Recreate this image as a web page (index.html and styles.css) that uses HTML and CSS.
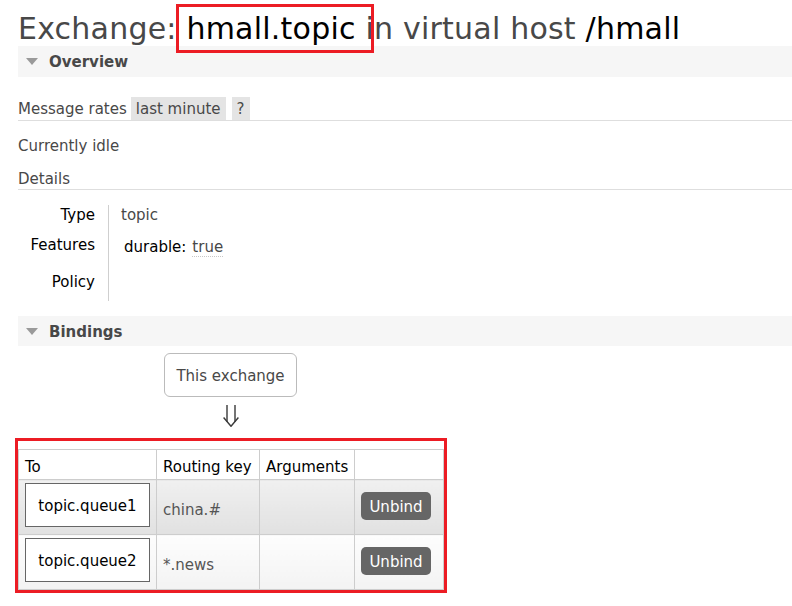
FILE: index.html
```html
<!DOCTYPE html>
<html lang="en">
<head>
<meta charset="utf-8">
<title>Exchange: hmall.topic</title>
<link rel="stylesheet" href="styles.css">
</head>
<body>
  <h1 class="title">Exchange: <span class="hl marked">hmall.topic</span> in virtual host <span class="hl">/hmall</span></h1>

  <div class="section-bar"><span class="tri"></span><span class="section-name">Overview</span></div>

  <div class="rates-row">
    <span class="rates-label">Message rates</span>
    <span class="chip chip-range">last minute</span>
    <span class="chip chip-help">?</span>
  </div>

  <p class="idle">Currently idle</p>
  <p class="details-title">Details</p>

  <div class="details">
    <div class="d-label d-r1">Type</div>
    <div class="d-value d-r1">topic</div>
    <div class="d-label d-r2">Features</div>
    <div class="d-value d-r2"><span class="feat-key">durable:</span><span class="feat-val">true</span></div>
    <div class="d-label d-r3">Policy</div>
    <div class="d-value d-r3"></div>
  </div>

  <div class="section-bar section-bindings"><span class="tri"></span><span class="section-name">Bindings</span></div>

  <div class="flow">
    <div class="this-exchange">This exchange</div>
    <svg class="down-arrow" width="16" height="22" viewBox="0 0 16 22" aria-hidden="true">
      <path d="M4 0 V17 M12 0 V17" stroke="#3a3a3a" stroke-width="1.4" fill="none"/>
      <path d="M0.6 12.5 L8 21.3 L15.4 12.5" stroke="#3a3a3a" stroke-width="1.4" fill="none" stroke-linejoin="miter"/>
    </svg>
  </div>

  <div class="marked-table">
    <table class="bindings">
      <colgroup>
        <col class="c-to"><col class="c-key"><col class="c-args"><col class="c-act">
      </colgroup>
      <thead>
        <tr><th>To</th><th>Routing key</th><th>Arguments</th><th></th></tr>
      </thead>
      <tbody>
        <tr class="row-hover">
          <td class="to-cell"><div class="queue-box">topic.queue1</div></td>
          <td class="key">china.#</td>
          <td></td>
          <td class="act"><span class="btn">Unbind</span></td>
        </tr>
        <tr class="row-plain">
          <td class="to-cell"><div class="queue-box">topic.queue2</div></td>
          <td class="key">*.news</td>
          <td></td>
          <td class="act"><span class="btn">Unbind</span></td>
        </tr>
      </tbody>
    </table>
  </div>
</body>
</html>
```

FILE: styles.css
```css
html, body {
  margin: 0;
  padding: 0;
}

body {
  padding-left: 18px;
  font-family: "DejaVu Sans", Verdana, sans-serif;
  font-size: 15px;
  line-height: 18px;
  color: #484848;
  background: #fff;
}

.title {
  margin: 12px 0 0 0;
  font-size: 30px;
  line-height: 34px;
  letter-spacing: 0.22px;
  font-weight: normal;
  color: #484848;
  white-space: nowrap;
}

.hl {
  color: #000;
}

.marked {
  position: relative;
}

.marked::after {
  content: "";
  position: absolute;
  left: -10px;
  right: -18px;
  top: -7px;
  height: 49px;
  border: 3px solid #ec1c24;
  box-sizing: border-box;
}

.section-bar {
  display: flex;
  align-items: center;
  height: 31px;
  background: #f6f6f6;
}

.tri {
  width: 0;
  height: 0;
  margin-left: 8px;
  margin-right: 11px;
  border-left: 6.5px solid transparent;
  border-right: 6.5px solid transparent;
  border-top: 7px solid #9a9a9a;
}

.section-name {
  font-weight: bold;
  color: #484848;
  padding-top: 1px;
}

.rates-row {
  display: flex;
  align-items: stretch;
  margin-top: 20px;
  height: 24px;
  box-sizing: border-box;
  border-bottom: 1px solid #dedede;
}

.rates-row > span {
  padding-top: 2px;
  line-height: 20px;
}

.chip {
  background: #e4e4e4;
  padding-left: 5px;
  padding-right: 5px;
}

.chip-range {
  margin-left: 4px;
}

.chip-help {
  margin-left: 6px;
}

.idle {
  margin: 16px 0 0 0;
}

.details-title {
  margin: 15px 0 0 0;
  padding-top: 0;
  padding-bottom: 1px;
  border-bottom: 1px solid #dedede;
}

.details {
  display: grid;
  grid-template-columns: 90px auto;
  margin-top: 15px;
}

.d-label {
  text-align: right;
  padding-right: 13px;
  color: #000;
}

.d-value {
  border-left: 1px solid #cfcfcf;
  padding-left: 12px;
}

.d-label,
.d-value {
  box-sizing: border-box;
  padding-top: 1px;
}

.d-r1 { height: 30px; }
.d-r2 { height: 37px; }
.d-r3 { height: 29px; }

.feat-key {
  color: #000;
  padding-left: 3px;
  margin-right: 6px;
}

.feat-val {
  display: inline-block;
  padding-top: 3px;
  line-height: 17px;
  border-bottom: 1px dotted #c8c8c8;
}

.section-bindings {
  margin-top: 15px;
  height: 30px;
}

.flow {
  width: 425px;
  display: flex;
  flex-direction: column;
  align-items: center;
}

.this-exchange {
  margin-top: 7px;
  width: 133px;
  height: 44px;
  box-sizing: border-box;
  border: 1px solid #bbb;
  border-radius: 6px;
  padding-top: 3px;
  line-height: 39px;
  text-align: center;
}

.down-arrow {
  display: block;
  margin-top: 8px;
  margin-left: 1px;
}

.marked-table {
  display: inline-block;
  margin-top: 11px;
  margin-left: -3px;
  border: 3px solid #ec1c24;
  padding-top: 8px;
}

.bindings {
  border-collapse: collapse;
  width: 425px;
  table-layout: fixed;
  font-size: 15px;
}

.c-to { width: 138px; }
.c-key { width: 103px; }
.c-args { width: 95px; }
.c-act { width: 89px; }

.bindings thead tr { height: 30px; }
.bindings tbody tr { height: 55px; }

.bindings th,
.bindings td {
  border: 1px solid #cdcdcd;
  padding: 0 6px;
}

.bindings th {
  padding-top: 4px;
  text-align: left;
  font-weight: normal;
  color: #000;
  background: #fff;
}

.bindings td {
  vertical-align: middle;
}

.row-hover td {
  background: linear-gradient(#f0f0f0, #e1e1e1);
}

.row-plain td {
  background: linear-gradient(#fdfdfd, #f3f3f3);
}

.bindings td.to-cell {
  padding: 2px 6px 6px 6px;
}

.queue-box {
  height: 44px;
  box-sizing: border-box;
  border: 1px solid #666;
  background: #fff;
  color: #000;
  padding-top: 3px;
  line-height: 39px;
  text-align: center;
}

.bindings td.key {
  color: #555;
  padding-top: 6px;
}

.bindings td.act {
  padding: 0 0 3px 6px;
}

.btn {
  display: inline-block;
  box-sizing: border-box;
  width: 70px;
  height: 28px;
  padding-top: 3px;
  line-height: 25px;
  text-align: center;
  background: #666;
  color: #fff;
  border-radius: 5px;
}
```
